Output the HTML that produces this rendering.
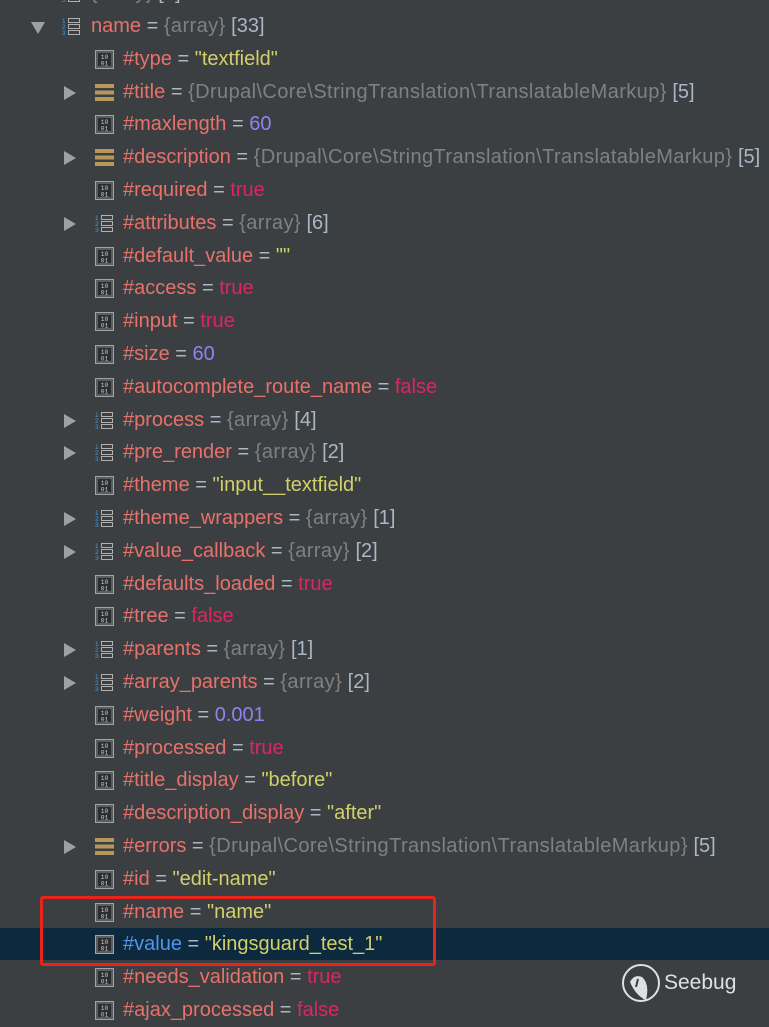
<!DOCTYPE html>
<html><head><meta charset="utf-8"><style>
body{margin:0;width:769px;height:1011px;background:#3c3f41;overflow:hidden;position:relative;font-family:"Liberation Sans","Noto Sans CJK SC",sans-serif;font-size:20px}
.r{position:absolute;left:0;width:769px;height:33px;line-height:33px;white-space:nowrap}
.hl{background:#0d293e}
.ar{position:absolute;left:64px;top:10px;width:0;height:0;border-top:7px solid transparent;border-bottom:7px solid transparent;border-left:12px solid #a0a0a0}
.dn{position:absolute;left:31px;top:12px;width:0;height:0;border-left:7px solid transparent;border-right:7px solid transparent;border-top:12px solid #a0a0a0}
.ic{position:absolute;left:95px;top:7px}
.t{position:absolute;left:123px;top:0}
.k{color:#e8716b}.kb{color:#5394ec}.eq{color:#a9b7c6}.s{color:#d3cf6a}.n{color:#8f83f2}.b{color:#e0245e}.g{color:#808080;letter-spacing:.4px}.c{color:#a9b7c6}
.box{position:absolute;left:40px;top:896px;width:390px;height:64px;border:3px solid #e8231c;border-radius:3px}
</style></head><body>
<svg width="0" height="0" style="position:absolute"><defs>
<g id="f"><rect x="0.5" y="0.5" width="18" height="18" fill="#5a5d60" stroke="#a0a4a8"/><rect x="3" y="3" width="13" height="13" fill="#2b2d2f"/><text x="9.5" y="9" font-size="6.5" fill="#c8c8c8" text-anchor="middle" font-family="Liberation Mono">10</text><text x="9.5" y="15.5" font-size="6.5" fill="#c8c8c8" text-anchor="middle" font-family="Liberation Mono">01</text></g>
<g id="a"><text x="0" y="6" font-size="6.5" fill="#3d9ae0" font-family="Liberation Sans">1</text><text x="0" y="12" font-size="6.5" fill="#3d9ae0" font-family="Liberation Sans">2</text><text x="0" y="18" font-size="6.5" fill="#3d9ae0" font-family="Liberation Sans">3</text><rect x="6.5" y="1.5" width="11" height="4" fill="none" stroke="#b0b0b0"/><rect x="6.5" y="7.5" width="11" height="4" fill="none" stroke="#b0b0b0"/><rect x="6.5" y="13.5" width="11" height="4" fill="none" stroke="#b0b0b0"/></g>
<g id="o"><rect x="0" y="1" width="19" height="4" fill="#b8975a"/><rect x="0" y="7.5" width="19" height="4" fill="#b8975a"/><rect x="0" y="14" width="19" height="4" fill="#b8975a"/></g>
</defs></svg>

<div class="r" style="top:-23px"><svg class="ic" style="left:62px" width="20" height="20"><use href="#a"/></svg><span class="t" style="left:91px"><span class="g">{array}</span> <span class="c">[5]</span></span></div>
<div class="r" style="top:10px"><div class="dn"></div><svg class="ic" style="left:62px" width="20" height="20"><use href="#a"/></svg><span class="t" style="left:91px"><span class="k">name</span> <span class="eq">=</span> <span class="g">{array}</span> <span class="c">[33]</span></span></div>
<div class="r" style="top:43px"><svg class="ic" width="20" height="20"><use href="#f"/></svg><span class="t"><span class="k">#type</span> <span class="eq">=</span> <span class="s">"textfield"</span></span></div>
<div class="r" style="top:76px"><div class="ar"></div><svg class="ic" width="20" height="20"><use href="#o"/></svg><span class="t"><span class="k">#title</span> <span class="eq">=</span> <span class="g">{Drupal\Core\StringTranslation\TranslatableMarkup}</span> <span class="c">[5]</span></span></div>
<div class="r" style="top:108px"><svg class="ic" width="20" height="20"><use href="#f"/></svg><span class="t"><span class="k">#maxlength</span> <span class="eq">=</span> <span class="n">60</span></span></div>
<div class="r" style="top:141px"><div class="ar"></div><svg class="ic" width="20" height="20"><use href="#o"/></svg><span class="t"><span class="k">#description</span> <span class="eq">=</span> <span class="g">{Drupal\Core\StringTranslation\TranslatableMarkup}</span> <span class="c">[5]</span></span></div>
<div class="r" style="top:174px"><svg class="ic" width="20" height="20"><use href="#f"/></svg><span class="t"><span class="k">#required</span> <span class="eq">=</span> <span class="b">true</span></span></div>
<div class="r" style="top:207px"><div class="ar"></div><svg class="ic" width="20" height="20"><use href="#a"/></svg><span class="t"><span class="k">#attributes</span> <span class="eq">=</span> <span class="g">{array}</span> <span class="c">[6]</span></span></div>
<div class="r" style="top:240px"><svg class="ic" width="20" height="20"><use href="#f"/></svg><span class="t"><span class="k">#default_value</span> <span class="eq">=</span> <span class="s">""</span></span></div>
<div class="r" style="top:272px"><svg class="ic" width="20" height="20"><use href="#f"/></svg><span class="t"><span class="k">#access</span> <span class="eq">=</span> <span class="b">true</span></span></div>
<div class="r" style="top:305px"><svg class="ic" width="20" height="20"><use href="#f"/></svg><span class="t"><span class="k">#input</span> <span class="eq">=</span> <span class="b">true</span></span></div>
<div class="r" style="top:338px"><svg class="ic" width="20" height="20"><use href="#f"/></svg><span class="t"><span class="k">#size</span> <span class="eq">=</span> <span class="n">60</span></span></div>
<div class="r" style="top:371px"><svg class="ic" width="20" height="20"><use href="#f"/></svg><span class="t"><span class="k">#autocomplete_route_name</span> <span class="eq">=</span> <span class="b">false</span></span></div>
<div class="r" style="top:404px"><div class="ar"></div><svg class="ic" width="20" height="20"><use href="#a"/></svg><span class="t"><span class="k">#process</span> <span class="eq">=</span> <span class="g">{array}</span> <span class="c">[4]</span></span></div>
<div class="r" style="top:436px"><div class="ar"></div><svg class="ic" width="20" height="20"><use href="#a"/></svg><span class="t"><span class="k">#pre_render</span> <span class="eq">=</span> <span class="g">{array}</span> <span class="c">[2]</span></span></div>
<div class="r" style="top:469px"><svg class="ic" width="20" height="20"><use href="#f"/></svg><span class="t"><span class="k">#theme</span> <span class="eq">=</span> <span class="s">"input__textfield"</span></span></div>
<div class="r" style="top:502px"><div class="ar"></div><svg class="ic" width="20" height="20"><use href="#a"/></svg><span class="t"><span class="k">#theme_wrappers</span> <span class="eq">=</span> <span class="g">{array}</span> <span class="c">[1]</span></span></div>
<div class="r" style="top:535px"><div class="ar"></div><svg class="ic" width="20" height="20"><use href="#a"/></svg><span class="t"><span class="k">#value_callback</span> <span class="eq">=</span> <span class="g">{array}</span> <span class="c">[2]</span></span></div>
<div class="r" style="top:568px"><svg class="ic" width="20" height="20"><use href="#f"/></svg><span class="t"><span class="k">#defaults_loaded</span> <span class="eq">=</span> <span class="b">true</span></span></div>
<div class="r" style="top:600px"><svg class="ic" width="20" height="20"><use href="#f"/></svg><span class="t"><span class="k">#tree</span> <span class="eq">=</span> <span class="b">false</span></span></div>
<div class="r" style="top:633px"><div class="ar"></div><svg class="ic" width="20" height="20"><use href="#a"/></svg><span class="t"><span class="k">#parents</span> <span class="eq">=</span> <span class="g">{array}</span> <span class="c">[1]</span></span></div>
<div class="r" style="top:666px"><div class="ar"></div><svg class="ic" width="20" height="20"><use href="#a"/></svg><span class="t"><span class="k">#array_parents</span> <span class="eq">=</span> <span class="g">{array}</span> <span class="c">[2]</span></span></div>
<div class="r" style="top:699px"><svg class="ic" width="20" height="20"><use href="#f"/></svg><span class="t"><span class="k">#weight</span> <span class="eq">=</span> <span class="n">0.001</span></span></div>
<div class="r" style="top:732px"><svg class="ic" width="20" height="20"><use href="#f"/></svg><span class="t"><span class="k">#processed</span> <span class="eq">=</span> <span class="b">true</span></span></div>
<div class="r" style="top:764px"><svg class="ic" width="20" height="20"><use href="#f"/></svg><span class="t"><span class="k">#title_display</span> <span class="eq">=</span> <span class="s">"before"</span></span></div>
<div class="r" style="top:797px"><svg class="ic" width="20" height="20"><use href="#f"/></svg><span class="t"><span class="k">#description_display</span> <span class="eq">=</span> <span class="s">"after"</span></span></div>
<div class="r" style="top:830px"><div class="ar"></div><svg class="ic" width="20" height="20"><use href="#o"/></svg><span class="t"><span class="k">#errors</span> <span class="eq">=</span> <span class="g">{Drupal\Core\StringTranslation\TranslatableMarkup}</span> <span class="c">[5]</span></span></div>
<div class="r" style="top:863px"><svg class="ic" width="20" height="20"><use href="#f"/></svg><span class="t"><span class="k">#id</span> <span class="eq">=</span> <span class="s">"edit-name"</span></span></div>
<div class="r" style="top:896px"><svg class="ic" width="20" height="20"><use href="#f"/></svg><span class="t"><span class="k">#name</span> <span class="eq">=</span> <span class="s">"name"</span></span></div>
<div class="r hl" style="top:928px;height:32px"><svg class="ic" width="20" height="20"><use href="#f"/></svg><span class="t"><span class="kb">#value</span> <span class="eq">=</span> <span class="s">"kingsguard_test_1"</span></span></div>
<div class="r" style="top:961px"><svg class="ic" width="20" height="20"><use href="#f"/></svg><span class="t"><span class="k">#needs_validation</span> <span class="eq">=</span> <span class="b">true</span></span></div>
<div class="r" style="top:994px"><svg class="ic" width="20" height="20"><use href="#f"/></svg><span class="t"><span class="k">#ajax_processed</span> <span class="eq">=</span> <span class="b">false</span></span></div>
<div class="box"></div>
<svg style="position:absolute;left:620px;top:962px" width="40" height="44"><circle cx="21" cy="21" r="18" fill="none" stroke="#e0e0e0" stroke-width="2"/><path d="M10 20 Q14 12 22 15 Q30 22 26 38 Q16 34 10 20Z" fill="#e0e0e0"/><path d="M18 17 L16 25" stroke="#3c3f41" stroke-width="2"/></svg>
<div style="position:absolute;left:664px;top:968px;font-size:21px;color:#e0e0e0;line-height:30px">Seebug</div>
</body></html>
